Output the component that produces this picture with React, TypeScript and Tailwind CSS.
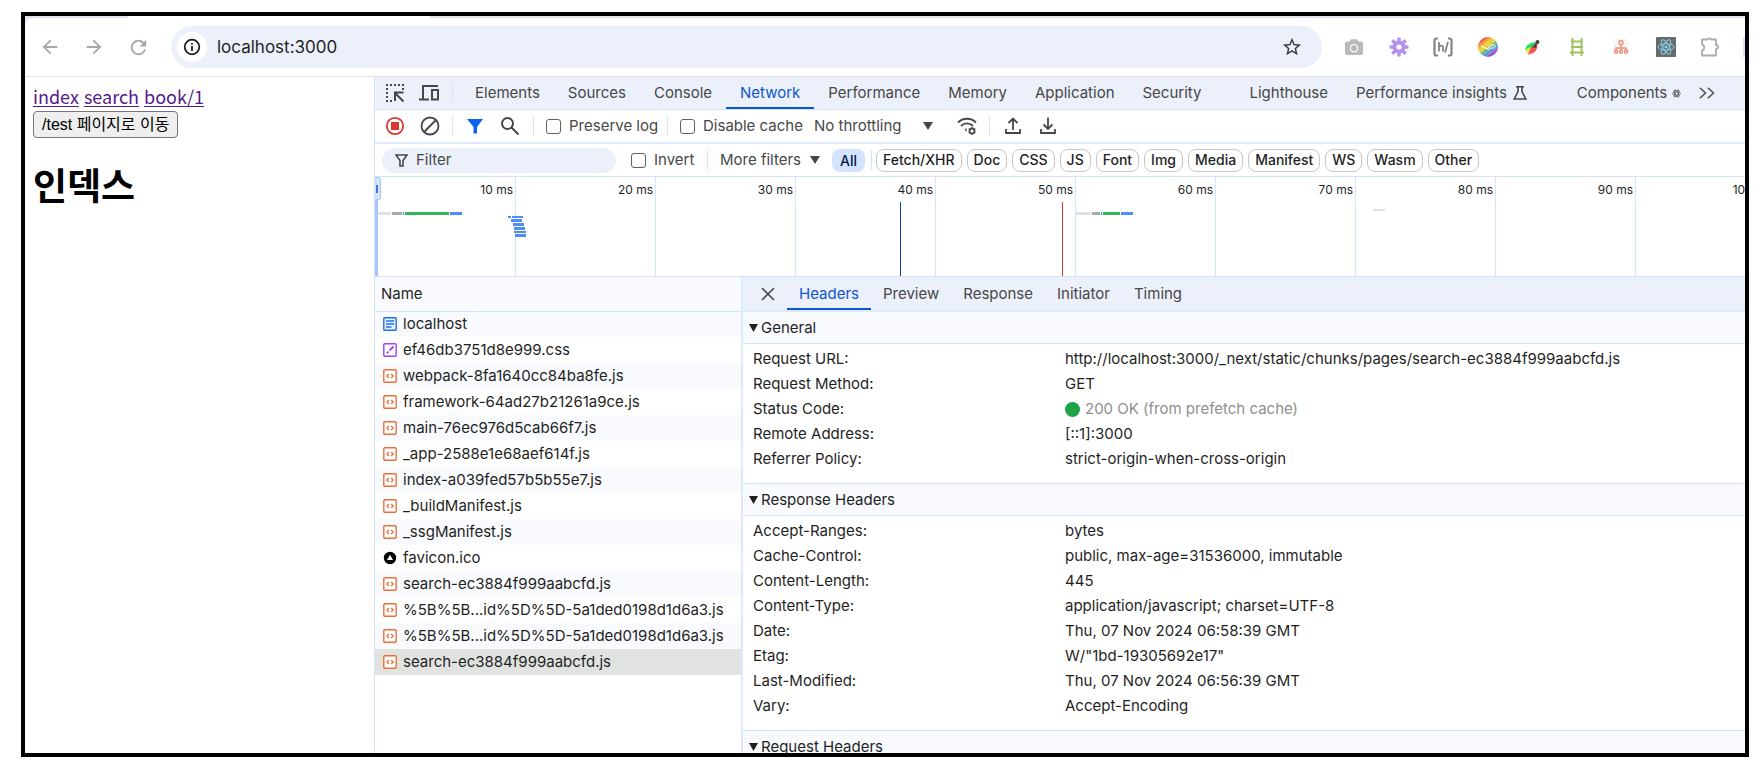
import type { ReactNode } from "react";
import { FaCamera } from "react-icons/fa";
import { MdArrowBack, MdArrowForward, MdRefresh, MdStarBorder } from "react-icons/md";

const ui = "font-[Inter,'Liberation_Sans',sans-serif]";

/* ---------- browser toolbar ---------- */

function ToolbarIcon({ label, children }: { label: string; children: ReactNode }) {
  return (
    <button type="button" aria-label={label} className="flex size-5 shrink-0 items-center justify-center">
      {children}
    </button>
  );
}

function Extensions() {
  return (
    <div className="flex w-[376px] shrink-0 items-center justify-between">
      <ToolbarIcon label="Screenshot">
        <FaCamera className="size-[18px] text-[#b9b9b9]" />
      </ToolbarIcon>
      <ToolbarIcon label="Settings">
        <svg viewBox="0 0 20 20" className="size-5" stroke="#b690ee" strokeWidth="3.400">
          <path d="M10 .5v19M.5 10h19M3.300 3.300l13.400 13.400M16.700 3.300L3.300 16.700" />
          <circle cx="10" cy="10" r="5.500" fill="#b690ee" strokeWidth="2" />
          <circle cx="10" cy="10" r="2.600" fill="#fff" stroke="none" />
        </svg>
      </ToolbarIcon>
      <ToolbarIcon label="Annotate">
        <svg viewBox="0 0 20 20" className="size-5 shrink-0" fill="none" stroke="#858585" strokeWidth="2.200">
          <path d="M5 1.500H3.500a2 2 0 0 0-2 2v13a2 2 0 0 0 2 2H5M15 1.500h1.500a2 2 0 0 1 2 2v13a2 2 0 0 1-2 2H15" />
          <path d="M6 5v9.500M6 10.500c1-2.500 4-2.500 4 0v4M15 5l-3 10.500" strokeWidth="1.800" />
        </svg>
      </ToolbarIcon>
      <ToolbarIcon label="Color picker">
        <svg viewBox="0 0 20 20" className="size-5">
          <defs>
            <clipPath id="disc">
              <circle cx="10" cy="10" r="10" />
            </clipPath>
          </defs>
          <g clipPath="url(#disc)">
            <g transform="rotate(-38 10 10)">
              <rect x="-4" y="-4" width="28" height="7" fill="#e8504f" />
              <rect x="-4" y="2" width="28" height="4" fill="#f39a3d" />
              <rect x="-4" y="5" width="28" height="5" fill="#f0cf45" />
              <rect x="-4" y="10" width="28" height="3" fill="#6cc069" />
              <rect x="-4" y="13" width="28" height="3" fill="#4f9be0" />
              <rect x="-4" y="16" width="28" height="9" fill="#9a5fd0" />
            </g>
          </g>
          <path d="M3 9l6 3 3-3 4-1.500 1.500 2-2 1.500h-3l-3 2" stroke="#fff" strokeWidth="1" fill="none" />
        </svg>
      </ToolbarIcon>
      <ToolbarIcon label="Color feather">
        <svg viewBox="0 0 20 20" className="size-5">
          <path d="M3 13c1-5 5-8 12-8l-6 7z" fill="#23e06b" />
          <path d="M3 13l5-3 1 6-3 1z" fill="#d9f23c" />
          <path d="M7 17c0-5 4-9 8-12 2 6-2 12-8 12z" fill="#f8504a" />
          <path d="M9 17l-3 1 1-4z" fill="#f25fd0" />
          <path d="M10 10l5-5-1 6z" fill="#444" />
          <circle cx="15.500" cy="5" r="2" fill="#444" />
        </svg>
      </ToolbarIcon>
      <ToolbarIcon label="Ladder">
        <svg viewBox="0 0 20 20" className="size-5" fill="none" stroke="#9fc45f" strokeWidth="2">
          <path d="M5.500 1v18M14.500 1v18M4 4.500h12M4 10h12M3 15.500h14" />
        </svg>
      </ToolbarIcon>
      <ToolbarIcon label="Site map">
        <svg viewBox="0 0 20 20" className="size-5" fill="none" stroke="#f08a74" strokeWidth="1.400">
          <rect x="2" y="2" width="16" height="16" rx="1" fill="#f8f6f5" stroke="none" />
          <circle cx="10" cy="5.500" r="2" />
          <path d="M10 8v5M5 13v-2h10v2" />
          <circle cx="5" cy="14.500" r="1.500" />
          <circle cx="10" cy="14.500" r="1.500" />
          <circle cx="15" cy="14.500" r="1.500" />
        </svg>
      </ToolbarIcon>
      <ToolbarIcon label="React Developer Tools">
        <svg viewBox="0 0 20 20" className="size-5" fill="none" stroke="#7fd3ee" strokeWidth="1">
          <rect width="20" height="20" rx="1" fill="#6b6b6b" stroke="none" />
          <ellipse cx="10" cy="10" rx="8" ry="3.200" />
          <ellipse cx="10" cy="10" rx="8" ry="3.200" transform="rotate(60 10 10)" />
          <ellipse cx="10" cy="10" rx="8" ry="3.200" transform="rotate(120 10 10)" />
          <circle cx="10" cy="10" r="1.600" fill="#7fd3ee" stroke="none" />
        </svg>
      </ToolbarIcon>
      <ToolbarIcon label="Extensions">
        <svg viewBox="0 0 20 20" className="size-5" fill="none" stroke="#ababab" strokeWidth="1.800">
          <path d="M2 2.500h5.500a2 2 0 0 1 3.500 0h5V8a2 2 0 0 1 0 4v6.500H2v-5c3-.5 3-5.500 0-6z" strokeLinejoin="round" />
        </svg>
      </ToolbarIcon>
    </div>
  );
}

function BrowserBar() {
  return (
    <header className="border-b border-[#e3e3e3] bg-[#dfe3ec]">
      {/* lower edge of the tab strip, with the active tab running into the toolbar */}
      <div className="h-0.5 pl-[103px]">
        <div className="h-full w-[302px] bg-white" />
      </div>
      <div className="flex h-[58px] items-center overflow-hidden rounded-tl-lg bg-white">
        <div className="flex w-[146px] shrink-0 items-center gap-6 pl-[15px] text-[#a8a8a8]">
          <ToolbarIcon label="Back">
            <MdArrowBack className="size-[22px] shrink-0" />
          </ToolbarIcon>
          <ToolbarIcon label="Forward">
            <MdArrowForward className="size-[22px] shrink-0" />
          </ToolbarIcon>
          <ToolbarIcon label="Reload">
            <MdRefresh className="size-[23px] shrink-0" />
          </ToolbarIcon>
        </div>
        <div className="flex h-[42px] min-w-0 flex-1 items-center rounded-full bg-[#ebf0fa] pr-5 pl-[6px]">
          <span className="flex size-[30px] shrink-0 items-center justify-center rounded-full bg-white">
            <svg viewBox="0 0 18 18" className="size-[18px]" fill="none" stroke="#1f1f1f" strokeWidth="1.800">
              <circle cx="9" cy="9" r="7.300" />
              <path d="M9 8v5M9 5v1.600" />
            </svg>
          </span>
          <input
            aria-label="Address"
            defaultValue="localhost:3000"
            className="ml-[10px] min-w-0 flex-1 bg-transparent pt-px text-[17px] text-[#1f1f1f] outline-none"
          />
          <ToolbarIcon label="Bookmark">
            <MdStarBorder className="size-[22px] shrink-0 text-[#3c3c3c]" />
          </ToolbarIcon>
        </div>
        <div className="flex shrink-0 items-center pl-[22px]">
          <Extensions />
          <span className="ml-[23px] h-5 w-0.5 bg-[#d3e3fd]" />
        </div>
      </div>
    </header>
  );
}

/* ---------- page under test ---------- */

function Page() {
  return (
    <main className="w-[349px] shrink-0 bg-white px-2 pt-2 font-['Noto_Sans_CJK_KR',sans-serif] text-black">
      <nav className="flex gap-[5px] pb-1 text-[18px] leading-[22px] text-[#551a8b]">
        <a href="#index" className="underline underline-offset-2">index</a>
        <a href="#search" className="underline underline-offset-2">search</a>
        <a href="#book" className="underline underline-offset-2">book/1</a>
      </nav>
      <button
        type="button"
        className="block h-[27px] rounded-[4px] border border-[#767676] bg-[#efefef] px-2 font-['Liberation_Sans','Noto_Sans_CJK_KR',sans-serif] text-[16px] leading-[24px]"
      >
        /test 페이지로 이동
      </button>
      <h1 className="mt-5 text-[37px] leading-[52px] font-bold">인덱스</h1>
    </main>
  );
}

/* ---------- devtools ---------- */

function Divider() {
  return <span className="h-5 w-px shrink-0 bg-[#d3e3fd]" />;
}

function Check({ label }: { label: string }) {
  return (
    <label className="flex shrink-0 items-center gap-2 whitespace-nowrap">
      <input type="checkbox" className="size-[15px] appearance-none rounded-[3px] border border-[#5f6163] bg-white" />
      {label}
    </label>
  );
}

function Arrow() {
  return (
    <svg viewBox="0 0 10 8" className="h-2 w-[10px] shrink-0" fill="#474747">
      <path d="M0 0h10L5 8z" />
    </svg>
  );
}

const TABS = ["Elements", "Sources", "Console", "Network", "Performance", "Memory", "Application", "Security"];

function DevtoolsTab({ active, children }: { active?: boolean; children: ReactNode }) {
  return (
    <button
      type="button"
      className={
        active
          ? "flex h-8 shrink-0 items-center border-b-2 border-[#0b57d0] px-[14px] pt-0.5 whitespace-nowrap text-[#0b57d0]"
          : "flex h-8 shrink-0 items-center px-[14px] whitespace-nowrap"
      }
    >
      {children}
    </button>
  );
}

function TabBar() {
  return (
    <div className="flex h-[33px] items-center overflow-hidden border-b border-[#d3e3fd] bg-[#ebf0fa]">
      <div className="flex w-[77px] shrink-0 items-center gap-[14px] pl-[10px]">
        <ToolbarIcon label="Inspect element">
          <svg viewBox="0 0 20 20" className="size-5" fill="none" stroke="#474747" strokeWidth="2">
            <path d="M1 2h18" strokeDasharray="2 2" />
            <path d="M2 5v14M5 18h3" strokeDasharray="2 2" />
            <path d="M18 5v3" strokeDasharray="2 2" />
            <path d="M10 18V9.500h8.500M10 10l8.500 8.500" />
          </svg>
        </ToolbarIcon>
        <ToolbarIcon label="Toggle device toolbar">
          <svg viewBox="0 0 20 20" className="size-5" fill="none" stroke="#474747" strokeWidth="2">
            <path d="M19 3H4v13M0 16.500h10" />
            <rect x="13" y="7" width="6" height="9.500" />
          </svg>
        </ToolbarIcon>
      </div>
      <Divider />
      <div className="flex pl-2">
        {TABS.map((t) => (
          <DevtoolsTab key={t} active={t === "Network"}>{t}</DevtoolsTab>
        ))}
      </div>
      <div className="flex pl-5">
        <DevtoolsTab>Lighthouse</DevtoolsTab>
        <DevtoolsTab>
          Performance insights
          <svg viewBox="0 0 14 14" className="ml-[6px] size-[14px]" fill="none" stroke="#474747" strokeWidth="1.600">
            <path d="M3 .8h8M5 1v4.500L1.200 13h11.600L9 5.500V1" />
          </svg>
        </DevtoolsTab>
      </div>
      <div className="flex items-center pl-[22px]">
        <DevtoolsTab>
          Components
          <svg viewBox="0 0 10 10" className="ml-[5px] size-[9px]" fill="none" stroke="#474747" strokeWidth=".8">
            <ellipse cx="5" cy="5" rx="4.500" ry="1.800" />
            <ellipse cx="5" cy="5" rx="4.500" ry="1.800" transform="rotate(60 5 5)" />
            <ellipse cx="5" cy="5" rx="4.500" ry="1.800" transform="rotate(120 5 5)" />
          </svg>
        </DevtoolsTab>
        <button type="button" aria-label="More tabs" className="ml-1">
          <svg viewBox="0 0 16 12" className="h-3 w-4" fill="none" stroke="#5a5a5a" strokeWidth="1.600">
            <path d="M1 .8L6.500 6 1 11.200M9 .8L14.500 6 9 11.200" />
          </svg>
        </button>
      </div>
    </div>
  );
}

function NetworkToolbar() {
  return (
    <div className="flex h-[34px] items-center overflow-hidden border-b-2 border-[#dfe9fc]">
      <div className="flex w-[77px] shrink-0 items-center gap-[15px] pl-[10px]">
        <ToolbarIcon label="Stop recording">
          <svg viewBox="0 0 20 20" className="size-5">
            <circle cx="10" cy="10" r="8.200" fill="none" stroke="#dc362e" strokeWidth="1.800" />
            <rect x="6" y="6" width="8" height="8" fill="#dc362e" />
          </svg>
        </ToolbarIcon>
        <ToolbarIcon label="Clear">
          <svg viewBox="0 0 20 20" className="size-5" fill="none" stroke="#474747" strokeWidth="1.800">
            <circle cx="10" cy="10" r="8.500" />
            <path d="M4 16L16 4" />
          </svg>
        </ToolbarIcon>
      </div>
      <Divider />
      <div className="flex w-20 shrink-0 items-center gap-[15px] pl-3">
        <ToolbarIcon label="Filter">
          <svg viewBox="0 0 16 16" className="size-4" fill="#0b63f0">
            <path d="M0 1h16L10 9v6.500H6.500V9z" />
          </svg>
        </ToolbarIcon>
        <ToolbarIcon label="Search">
          <svg viewBox="0 0 20 20" className="size-5" fill="none" stroke="#474747" strokeWidth="2">
            <circle cx="7.500" cy="7.500" r="5.500" />
            <path d="M11.500 11.500l7 7" />
          </svg>
        </ToolbarIcon>
      </div>
      <Divider />
      <div className="flex w-[133px] shrink-0 pl-3">
        <Check label="Preserve log" />
      </div>
      <Divider />
      <div className="flex w-[134px] shrink-0 pl-3">
        <Check label="Disable cache" />
      </div>
      <div className="relative mr-6 flex w-[131px] shrink-0 items-center">
        <select
          aria-label="Throttling"
          className="w-full appearance-none bg-transparent pl-3 text-[15px] outline-none"
        >
          <option>No throttling</option>
        </select>
        <span className="pointer-events-none absolute right-0 flex">
          <Arrow />
        </span>
      </div>
      <ToolbarIcon label="Network conditions">
        <svg viewBox="0 0 20 20" className="size-5" fill="none" stroke="#474747" strokeWidth="1.800">
          <path d="M1 6.500c5-5 13-5 18 0M4 10c3.500-3.500 8.500-3.500 12 0" />
          <path d="M7.500 13.500l2-1.500v4z" fill="#474747" stroke="none" />
          <circle cx="15" cy="15" r="2.500" />
          <path d="M15 11v8M11.500 13l7 4M11.500 17l7-4" strokeWidth="1" />
          <circle cx="15" cy="15" r="1.500" fill="#fff" stroke="none" />
        </svg>
      </ToolbarIcon>
      <span className="w-3 shrink-0" />
      <Divider />
      <div className="flex gap-[15px] pl-[13px]">
        <ToolbarIcon label="Import HAR">
          <svg viewBox="0 0 20 20" className="size-5" fill="none" stroke="#474747" strokeWidth="1.800">
            <path d="M10 14V2.500M5.500 7L10 2.500 14.500 7M3 13v4h14v-4" />
          </svg>
        </ToolbarIcon>
        <ToolbarIcon label="Export HAR">
          <svg viewBox="0 0 20 20" className="size-5" fill="none" stroke="#474747" strokeWidth="1.800">
            <path d="M10 1.500V13M5.500 8.500L10 13l4.500-4.500M3 13v4h14v-4" />
          </svg>
        </ToolbarIcon>
      </div>
    </div>
  );
}

const TYPES = ["Fetch/XHR", "Doc", "CSS", "JS", "Font", "Img", "Media", "Manifest", "WS", "Wasm", "Other"];

function FilterBar() {
  return (
    <div className="flex h-[33px] items-center overflow-hidden border-b border-[#d3e3fd]">
      <label className="ml-[7px] flex h-[25px] w-[234px] shrink-0 items-center gap-2 rounded-full bg-[#ebf0fa] pl-[13px]">
        <svg viewBox="0 0 13 13" className="size-[13px]" fill="none" stroke="#474747" strokeWidth="1.600">
          <path d="M1 1h11L8 6.500V12H5V6.500z" />
        </svg>
        <input
          aria-label="Filter"
          placeholder="Filter"
          className="w-40 bg-transparent text-[15px] outline-none placeholder:text-[#474747]"
        />
      </label>
      <div className="flex w-[91px] shrink-0 pl-[15px]">
        <Check label="Invert" />
      </div>
      <Divider />
      <button type="button" className="mr-3 flex w-[112px] shrink-0 items-center justify-between pl-3 whitespace-nowrap">
        More filters
        <Arrow />
      </button>
      <button type="button" className="h-[23px] shrink-0 rounded-lg bg-[#d3e3fd] px-2 text-[14px] font-medium text-[#041e49]">
        All
      </button>
      <span className="w-[6px] shrink-0" />
      <Divider />
      <div className="ml-1 flex gap-[5px]">
        {TYPES.map((t) => (
          <button
            key={t}
            type="button"
            className="h-[23px] shrink-0 rounded-lg border border-[#c7c7c7] px-[6px] text-[14px] leading-5 font-medium text-[#1f1f1f]"
          >
            {t}
          </button>
        ))}
      </div>
    </div>
  );
}

const TICKS = [10, 20, 30, 40, 50, 60, 70, 80, 90, 100];

// x, y, width, height, fill
const SPANS: [number, number, number, number, string][] = [
  [3, 35, 13, 3, "#e1e1e1"],
  [17, 35, 10, 3, "#a8a8a8"],
  [28, 35, 1, 3, "#12a1c0"],
  [30, 35, 44, 3, "#34b658"],
  [75, 35, 12, 3, "#4c8df6"],
  [133, 39, 3, 2, "#4c8df6"],
  [137, 39, 11, 2, "#4c8df6"],
  [136, 42, 11, 3, "#4c8df6"],
  [138, 46, 11, 3, "#4c8df6"],
  [139, 50, 11, 3, "#4c8df6"],
  [139, 54, 12, 2, "#4c8df6"],
  [140, 57, 11, 3, "#4c8df6"],
  [701, 35, 15, 3, "#e1e1e1"],
  [717, 35, 8, 3, "#a8a8a8"],
  [726, 35, 1, 3, "#12a1c0"],
  [728, 35, 17, 3, "#34b658"],
  [746, 35, 12, 3, "#4c8df6"],
  [998, 32, 12, 2, "#e1e1e1"],
];

function Timeline() {
  return (
    <div className="relative flex h-[100px] overflow-hidden border-b border-[#d3e3fd] pl-px">
      {TICKS.map((t) => (
        <span
          key={t}
          className="w-[140px] shrink-0 border-r border-[#d3e3fd] pt-[5px] pr-[2px] text-right text-[12px] leading-4 text-[#1f1f1f]"
        >
          {t} ms
        </span>
      ))}
      <svg className="absolute inset-0 h-full w-full" shapeRendering="crispEdges">
        {SPANS.map(([x, y, w, h, fill]) => (
          <rect key={`${x}-${y}`} x={x} y={y} width={w} height={h} fill={fill} />
        ))}
        <rect x="525" y="25" width="1" height="75" fill="#0842a0" />
        <rect x="687" y="25" width="1" height="75" fill="#dc362e" />
        <rect x="0" y="23" width="3" height="77" fill="#a8c7fa" />
      </svg>
      <span className="absolute top-0 left-0 flex h-[23px] w-[6px] items-center rounded-r-[3px] border border-l-0 border-[#a8c7fa] bg-[#d3e3fd]">
        <span className="ml-px h-2 w-0.5 bg-[#3b78e0]" />
      </span>
    </div>
  );
}

type Kind = "doc" | "css" | "js" | "ico";

const REQUESTS: { name: string; kind: Kind }[] = [
  { name: "localhost", kind: "doc" },
  { name: "ef46db3751d8e999.css", kind: "css" },
  { name: "webpack-8fa1640cc84ba8fe.js", kind: "js" },
  { name: "framework-64ad27b21261a9ce.js", kind: "js" },
  { name: "main-76ec976d5cab66f7.js", kind: "js" },
  { name: "_app-2588e1e68aef614f.js", kind: "js" },
  { name: "index-a039fed57b5b55e7.js", kind: "js" },
  { name: "_buildManifest.js", kind: "js" },
  { name: "_ssgManifest.js", kind: "js" },
  { name: "favicon.ico", kind: "ico" },
  { name: "search-ec3884f999aabcfd.js", kind: "js" },
  { name: "%5B%5B...id%5D%5D-5a1ded0198d1d6a3.js", kind: "js" },
  { name: "%5B%5B...id%5D%5D-5a1ded0198d1d6a3.js", kind: "js" },
  { name: "search-ec3884f999aabcfd.js", kind: "js" },
];

function FileIcon({ kind }: { kind: Kind }) {
  if (kind === "ico") {
    return (
      <svg viewBox="0 0 14 14" className="size-[14px] shrink-0">
        <circle cx="7" cy="7" r="6.200" fill="#000" />
        <path d="M7 3.800L10 9H4z" fill="#fff" />
      </svg>
    );
  }
  const color = kind === "doc" ? "#1a73e8" : kind === "css" ? "#a142f4" : "#e8703a";
  return (
    <svg viewBox="0 0 14 14" className="size-[14px] shrink-0" fill="none" stroke={color} strokeWidth="1.400">
      <rect x=".8" y=".8" width="12.400" height="12.400" rx="1" fill={kind === "doc" ? "#eaf1fe" : "#fff"} />
      {kind === "doc" && <path d="M3 4h8M3 7h8M3 10h5.500" />}
      {kind === "css" && <path d="M10.500 3.500L6.500 7.500M3.800 10.200l1.800-1.600" strokeWidth="1.800" />}
      {kind === "js" && <path d="M5.800 5L3.900 7l1.900 2M8.200 5l1.900 2-1.900 2" strokeWidth="1.300" />}
    </svg>
  );
}

function RequestList() {
  return (
    <div className="w-[366px] shrink-0 overflow-hidden text-[#1f1f1f]">
      <table className="w-full border-collapse">
        <thead>
          <tr className="h-[34px] border-b border-[#d3e3fd] bg-[#f8fafd]">
            <th className="p-0 pl-[6px] text-left font-normal">Name</th>
          </tr>
        </thead>
        <tbody>
          {REQUESTS.map((r, i) => {
            const selected = i === REQUESTS.length - 1;
            return (
              <tr
                key={i}
                className={selected ? "h-[26px] bg-[#e1e3e1]" : "h-[26px] odd:bg-[#f8fafd]"}
              >
                <td className="p-0 pl-2">
                  <div className="flex items-center gap-[6px] leading-5 whitespace-nowrap">
                    <FileIcon kind={r.kind} />
                    {r.name}
                  </div>
                </td>
              </tr>
            );
          })}
        </tbody>
      </table>
    </div>
  );
}

const GENERAL = [
  ["Request URL:", "http://localhost:3000/_next/static/chunks/pages/search-ec3884f999aabcfd.js"],
  ["Request Method:", "GET"],
  ["Status Code:", "200 OK (from prefetch cache)"],
  ["Remote Address:", "[::1]:3000"],
  ["Referrer Policy:", "strict-origin-when-cross-origin"],
];

const RESPONSE = [
  ["Accept-Ranges:", "bytes"],
  ["Cache-Control:", "public, max-age=31536000, immutable"],
  ["Content-Length:", "445"],
  ["Content-Type:", "application/javascript; charset=UTF-8"],
  ["Date:", "Thu, 07 Nov 2024 06:58:39 GMT"],
  ["Etag:", 'W/"1bd-19305692e17"'],
  ["Last-Modified:", "Thu, 07 Nov 2024 06:56:39 GMT"],
  ["Vary:", "Accept-Encoding"],
];

function Section({ title, rows }: { title: string; rows: string[][] }) {
  return (
    <section className="border-b border-[#d3e3fd]">
      <h2 className="flex h-8 items-center gap-[3px] border-b border-[#d3e3fd] bg-[#f8fafd] pt-px pl-[6px]">
        <svg viewBox="0 0 9 8" className="h-2 w-[9px]" fill="#1f1f1f">
          <path d="M0 0h9L4.500 8z" />
        </svg>
        {title}
      </h2>
      {rows.length > 0 && (
        <dl className="pt-[3px] pb-[11px]">
          {rows.map(([k, v]) => (
            <div key={k} className="flex h-[25px] items-center pl-[10px] whitespace-nowrap">
              <dt className="w-[312px] shrink-0">{k}</dt>
              {k === "Status Code:" ? (
                <dd className="flex items-center gap-[5px] text-[#8f8f8f]">
                  <span className="size-[15px] rounded-full bg-[#1ea446]" />
                  {v}
                </dd>
              ) : (
                <dd>{v}</dd>
              )}
            </div>
          ))}
        </dl>
      )}
    </section>
  );
}

const DETAIL_TABS = ["Headers", "Preview", "Response", "Initiator", "Timing"];

function Details() {
  return (
    <div className="min-w-0 flex-1 overflow-hidden border-l-2 border-[#dfe9fc] text-[#1f1f1f]">
      <div className="flex h-[35px] border-b-2 border-[#dfe9fc] bg-[#ebf0fa] text-[#474747]">
        <button type="button" aria-label="Close" className="flex w-11 items-center pl-[18px]">
          <svg viewBox="0 0 14 14" className="size-[14px]" fill="none" stroke="#474747" strokeWidth="1.600">
            <path d="M1 1l12 12M13 1L1 13" />
          </svg>
        </button>
        {DETAIL_TABS.map((t, i) => (
          <button
            key={t}
            type="button"
            className={i === 0 ? "border-b-2 border-[#0b57d0] px-3 pt-[3px] text-[#0b57d0]" : "px-3 pt-px"}
          >
            {t}
          </button>
        ))}
      </div>
      <Section title="General" rows={GENERAL} />
      <Section title="Response Headers" rows={RESPONSE} />
      <Section title="Request Headers" rows={[]} />
    </div>
  );
}

function Devtools() {
  return (
    <aside className="flex min-w-0 flex-1 flex-col overflow-hidden border-l border-[#d3e3fd] bg-white text-[15px] text-[#474747]">
      <TabBar />
      <NetworkToolbar />
      <FilterBar />
      <Timeline />
      <div className="flex min-h-0 flex-1">
        <RequestList />
        <Details />
      </div>
    </aside>
  );
}

export default function App() {
  return (
    <div className={`h-screen bg-white pt-3 pr-[13px] pb-[11px] pl-[21px] ${ui}`}>
      <div className="flex h-full flex-col overflow-hidden border-4 border-black">
        <BrowserBar />
        <div className="flex min-h-0 flex-1">
          <Page />
          <Devtools />
        </div>
      </div>
    </div>
  );
}
